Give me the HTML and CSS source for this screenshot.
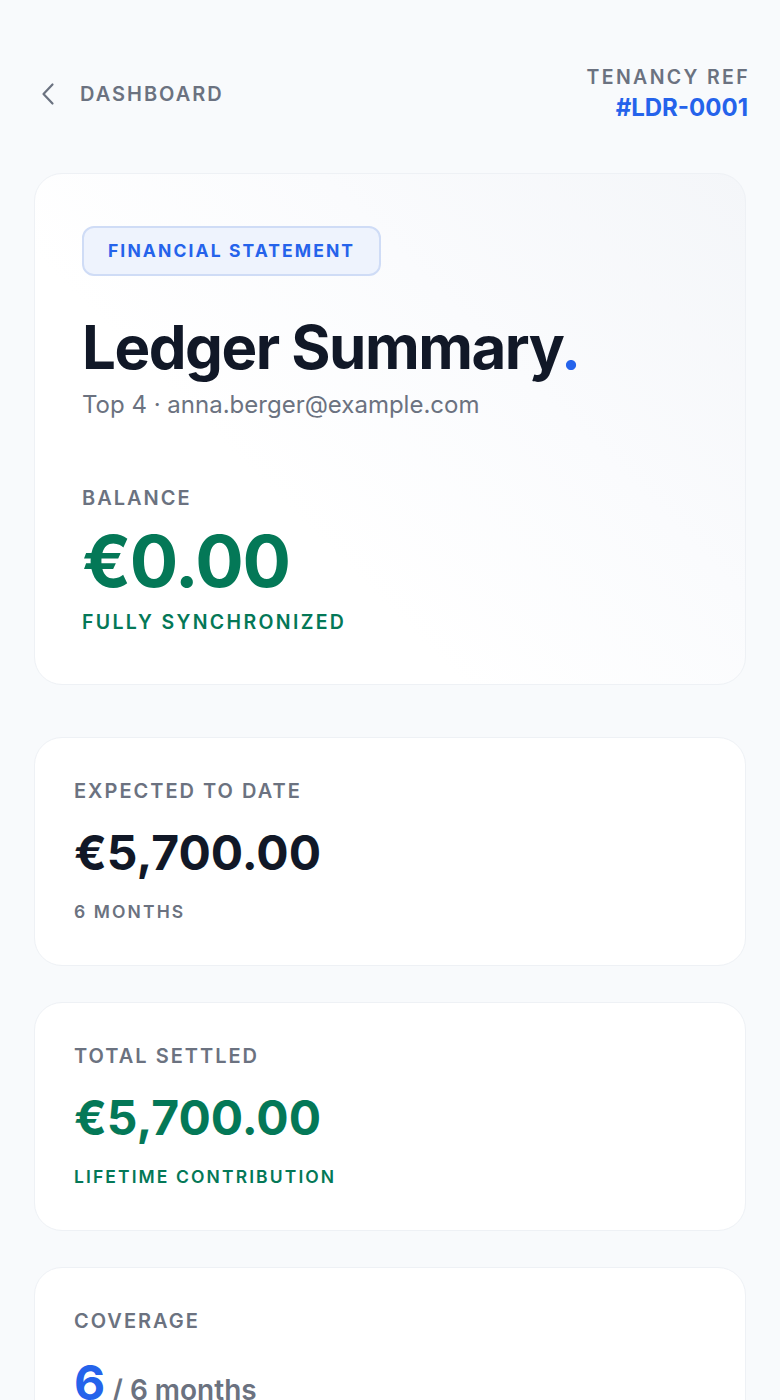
FILE: index.html
```html
<!DOCTYPE html>
<html lang="en">
<head>
  <meta charset="UTF-8">
  <meta name="viewport" content="width=device-width, initial-scale=1.0">
  <title>Ledger Summary</title>
  <link rel="stylesheet" href="styles.css">
</head>
<body>
  <div class="page">
    <!-- Top bar -->
    <div class="topbar">
      <a class="back" href="#">
        <svg class="back-icon" viewBox="0 0 16 24" width="16" height="24" fill="none" stroke="currentColor" stroke-width="2.2" stroke-linecap="round" stroke-linejoin="round">
          <path d="M12.5 2.5L3.5 12l9 9.5"/>
        </svg>
        <span>DASHBOARD</span>
      </a>
      <div class="ref">
        <p class="ref-label">TENANCY REF</p>
        <p class="ref-value">#LDR-0001</p>
      </div>
    </div>

    <!-- Hero card -->
    <div class="card hero">
      <span class="badge">FINANCIAL STATEMENT</span>
      <h1 class="title">Ledger Summary<span class="dot">.</span></h1>
      <p class="subtitle">Top 4 · anna.berger@example.com</p>

      <div class="balance">
        <p class="label">BALANCE</p>
        <p class="balance-value">€0.00</p>
        <p class="note big green">FULLY SYNCHRONIZED</p>
      </div>
    </div>

    <!-- Stats -->
    <div class="card stat">
      <p class="label">EXPECTED TO DATE</p>
      <p class="stat-value">€5,700.00</p>
      <p class="note">6 MONTHS</p>
    </div>

    <div class="card stat">
      <p class="label">TOTAL SETTLED</p>
      <p class="stat-value green">€5,700.00</p>
      <p class="note green">LIFETIME CONTRIBUTION</p>
    </div>

    <div class="card stat">
      <p class="label">COVERAGE</p>
      <p class="coverage"><span class="coverage-num">6</span> / 6 months</p>
    </div>
  </div>
</body>
</html>
```

FILE: styles.css
```css
/* Base */
body {
  margin: 0;
  font-family: Inter, "Noto Sans", sans-serif;
  background-color: #f8fafc;
  color: #111827;
}
p {
  margin: 0;
}
.page {
  padding: 65px 34px 40px;
}
/* Top bar */
.topbar {
  display: flex;
  justify-content: space-between;
  align-items: flex-start;
  margin-bottom: 50px;
}
.back {
  display: flex;
  align-items: center;
  gap: 24px;
  margin-top: 17px;
  color: #6b7280;
  text-decoration: none;
  font-size: 20px;
  line-height: 24px;
  font-weight: 600;
  letter-spacing: 0.1em;
}
.back-icon {
  margin-left: 6px;
}
.ref {
  text-align: right;
  margin-right: -2px;
}
.ref-label {
  font-size: 19.5px;
  line-height: 24px;
  font-weight: 600;
  letter-spacing: 0.12em;
  color: #6b7280;
  margin-right: -2px;
}
.ref-value {
  font-size: 24px;
  line-height: 30px;
  font-weight: 700;
  color: #2563eb;
  margin-top: 4px;
}
/* Cards */
.card {
  background-color: #ffffff;
  border: 1px solid #eef1f5;
  border-radius: 28px;
  margin-bottom: 36px;
}
.hero {
  padding: 52px 47px 50px;
  margin-bottom: 52px;
  background: linear-gradient(225deg, #f4f6f9 0%, #fafbfd 35%, #ffffff 65%);
}
.badge {
  display: inline-block;
  padding: 13px 24px;
  background-color: #eef3fd;
  border: 2px solid #cfdcf6;
  border-radius: 12px;
  color: #2563eb;
  font-size: 17.5px;
  line-height: 20px;
  font-weight: 700;
  letter-spacing: 0.12em;
}
.title {
  margin: 36px 0 0;
  font-size: 60px;
  line-height: 70px;
  font-weight: 700;
  letter-spacing: -0.025em;
  color: #111827;
}
.dot {
  color: #2563eb;
}
.subtitle {
  margin-top: 8px;
  font-size: 24px;
  line-height: 30px;
  color: #6b7280;
}
.balance {
  margin-top: 66px;
}
.label {
  font-size: 20px;
  line-height: 24px;
  font-weight: 600;
  letter-spacing: 0.1em;
  color: #6b7280;
}
.balance-value {
  margin-top: 11px;
  font-size: 72px;
  line-height: 80px;
  font-weight: 700;
  letter-spacing: -0.02em;
  color: #047857;
}
.note {
  margin-top: 20px;
  font-size: 17.5px;
  line-height: 22px;
  font-weight: 600;
  letter-spacing: 0.12em;
  color: #6b7280;
}
.note.big {
  margin-top: 9px;
  font-size: 19.5px;
  line-height: 24px;
}
.green {
  color: #047857;
}
/* Stat cards */
.stat {
  padding: 41px 39px 42px;
}
.stat-value {
  margin-top: 22px;
  font-size: 48px;
  line-height: 56px;
  font-weight: 700;
  color: #111827;
}
.stat-value.green {
  color: #047857;
}
.coverage {
  margin-top: 22px;
  font-size: 28px;
  line-height: 56px;
  font-weight: 600;
  color: #6b7280;
}
.coverage-num {
  font-size: 48px;
  font-weight: 700;
  color: #2563eb;
}
```
